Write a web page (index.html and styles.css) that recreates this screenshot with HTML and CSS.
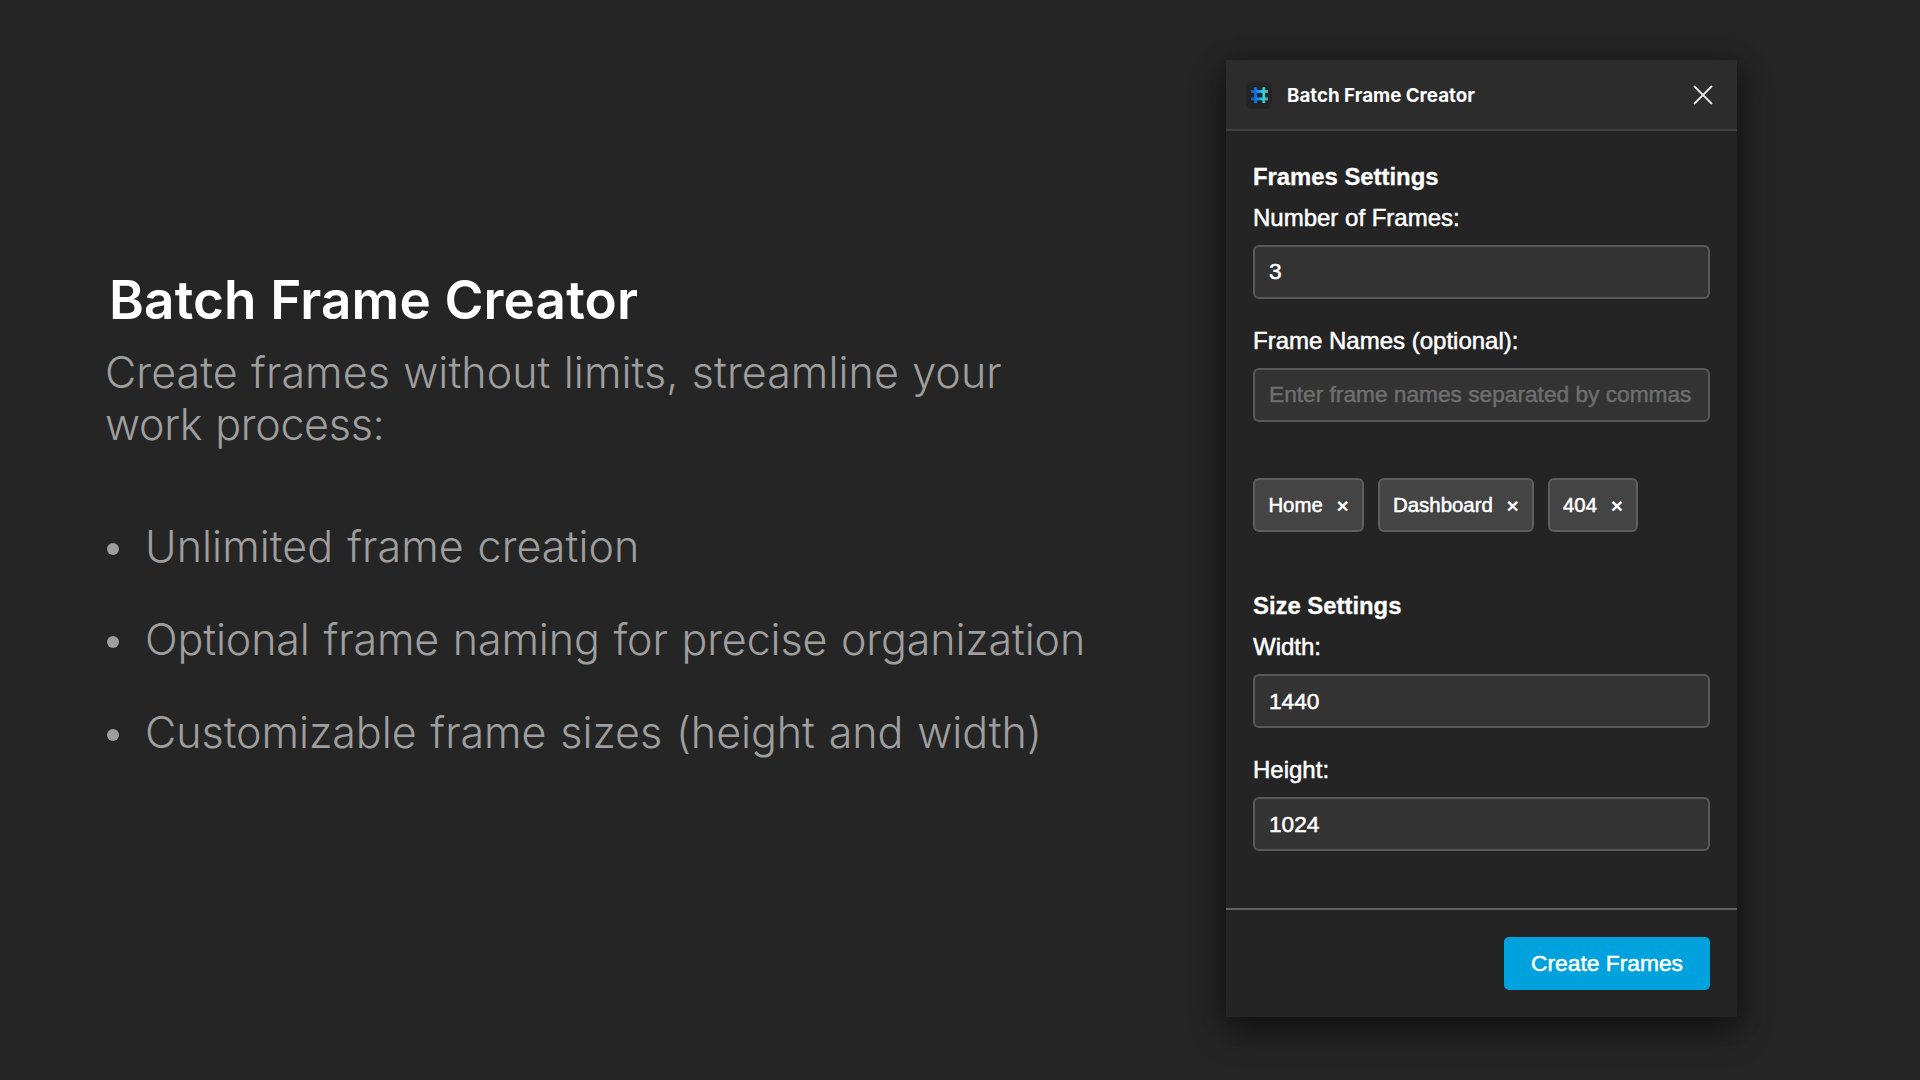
FILE: index.html
```html
<!DOCTYPE html>
<html lang="en">
<head>
<meta charset="utf-8">
<title>Batch Frame Creator</title>
<link rel="stylesheet" href="styles.css">
</head>
<body>
<main class="stage">
  <section class="intro">
    <h1 class="intro-title">Batch Frame Creator</h1>
    <p class="intro-lead">Create frames without limits, streamline your<br><span class="lead-end">work process:</span></p>
    <ul class="features">
      <li class="feature feature-short">Unlimited frame creation</li>
      <li class="feature feature-long">Optional frame naming for precise organization</li>
      <li class="feature">Customizable frame sizes (height and width)</li>
    </ul>
  </section>

  <section class="panel">
    <header class="panel-header">
      <span class="logo">
        <svg width="26" height="28" viewBox="0 0 26 28" fill="none">
          <defs>
            <linearGradient id="hash" gradientUnits="userSpaceOnUse" x1="4.5" y1="0" x2="22.5" y2="0">
              <stop offset="0" stop-color="#3346b4"/>
              <stop offset="0.3" stop-color="#0879f5"/>
              <stop offset="0.72" stop-color="#2bd6e2"/>
              <stop offset="1" stop-color="#5b9a84"/>
            </linearGradient>
          </defs>
          <path d="M5 10.5H22M5 17.9H22M9.5 6.3V22M17.8 6.3V22" stroke="url(#hash)" stroke-width="2.8"/>
        </svg>
      </span>
      <span class="panel-title">Batch Frame Creator</span>
      <svg class="close" width="20" height="20" viewBox="0 0 20 20" fill="none" stroke="#e6e6e6" stroke-width="1.8">
        <path d="M1 1L19 19M19 1L1 19"/>
      </svg>
    </header>

    <div class="panel-body">
      <div class="group">
        <h2 class="heading">Frames Settings</h2>
        <label class="label" for="count">Number of Frames:</label>
        <input class="field" id="count" type="text" value="3">
        <label class="label label-next" for="names">Frame Names (optional):</label>
        <input class="field" id="names" type="text" placeholder="Enter frame names separated by commas">
        <div class="chips">
          <span class="chip">Home<b class="remove">×</b></span>
          <span class="chip">Dashboard<b class="remove">×</b></span>
          <span class="chip">404<b class="remove">×</b></span>
        </div>
      </div>
      <div class="group">
        <h2 class="heading">Size Settings</h2>
        <label class="label" for="width">Width:</label>
        <input class="field field-size" id="width" type="text" value="1440">
        <label class="label label-next" for="height">Height:</label>
        <input class="field field-size" id="height" type="text" value="1024">
      </div>
    </div>

    <footer class="panel-footer">
      <button class="submit" type="button">Create Frames</button>
    </footer>
  </section>
</main>
</body>
</html>
```
FILE: styles.css
```css
* { box-sizing: border-box; }

body {
  margin: 0;
  background: #252525;
  color: #fff;
  font-family: "Liberation Sans", Arial, sans-serif;
}

.stage {
  display: flex;
  justify-content: space-between;
  align-items: flex-start;
  height: 1080px;
  padding: 60px 183px 0 105px;
  overflow: hidden;
}

/* Left column */
.intro {
  padding-top: 208px;
  font-family: Inter, sans-serif;
}

.intro-title {
  margin: 0 0 0 4px;
  font-size: 53px;
  font-weight: 600;
  line-height: 64px;
  letter-spacing: 0.15px;
}

.intro-lead {
  margin: 14px 0 0;
  color: #9e9e9e;
  font-size: 43px;
  font-weight: 300;
  line-height: 52px;
  letter-spacing: 0.05px;
  word-spacing: 1.2px;
  white-space: nowrap;
}

.lead-end { letter-spacing: -0.3px; }

.features {
  display: flex;
  flex-direction: column;
  gap: 41px;
  margin: 70px 0 0;
  padding: 0;
  list-style: none;
}

.feature {
  display: flex;
  align-items: center;
  gap: 26px;
  height: 52px;
  color: #9e9e9e;
  font-size: 43px;
  font-weight: 300;
  line-height: 52px;
  letter-spacing: -0.05px;
  word-spacing: 1.8px;
  white-space: nowrap;
}

.feature-short { letter-spacing: 0.04px; }

.feature-long { letter-spacing: -0.14px; }

.feature::before {
  content: "";
  width: 12px;
  height: 12px;
  margin: 6px 0 0 2px;
  border-radius: 50%;
  background: #9e9e9e;
}

/* Plugin window */
.panel {
  display: flex;
  flex-direction: column;
  width: 511px;
  height: 957px;
  background: #242424;
  box-shadow: 0 3px 24px rgba(0, 0, 0, 0.3), 0 14px 32px rgba(0, 0, 0, 0.42);
}

.panel-header {
  display: flex;
  align-items: center;
  height: 71px;
  padding: 0 24px 0 20px;
  border-bottom: 2px solid #414141;
  background: #2c2c2c;
}

.logo {
  width: 26px;
  height: 28px;
  border-radius: 6px;
  background: #242424;
}

.logo svg { display: block; }

.panel-title {
  margin: 2px 0 0 15px;
  font: 700 18.75px/28px Inter, sans-serif;
}

.close { margin-left: auto; }

.panel-body {
  flex: 1;
  padding: 32px 27px 0;
}

.group + .group { margin-top: 60px; }

.heading,
.label {
  display: block;
  margin: 0;
  font-size: 24px;
  line-height: 28px;
}

.heading {
  font-weight: 700;
  font-size: 23.85px;
  -webkit-text-stroke: 0.3px currentColor;
}

.label {
  margin-top: 13px;
  -webkit-text-stroke: 0.5px currentColor;
}

.label-next { margin-top: 28px; }

.field {
  display: block;
  width: 457px;
  height: 54px;
  margin: 13px 0 0;
  padding: 0 14px 2px;
  border: 2px solid #5a5a5a;
  border-radius: 6px;
  background: #333;
  color: #fff;
  font: 22.7px "Liberation Sans", Arial, sans-serif;
  -webkit-text-stroke: 0.5px currentColor;
}

.field::placeholder { color: #6e6e6e; opacity: 1; }

.field-size { padding: 1px 14px 0; }

.chips {
  display: flex;
  gap: 13.5px;
  margin-top: 56.3px;
}

.chip {
  display: flex;
  align-items: center;
  height: 54px;
  padding: 0 13.4px;
  border: 2px solid #5e5e5e;
  border-radius: 6px;
  background: #444;
  font-size: 20.4px;
  line-height: 48px;
  -webkit-text-stroke: 0.5px currentColor;
}

.remove {
  margin: 1px 0 0 13.7px;
  font-size: 21px;
  -webkit-text-stroke: 0;
}

.panel-footer {
  display: flex;
  justify-content: flex-end;
  height: 109px;
  padding: 27px 27px 0 0;
  border-top: 2px solid #606060;
}

.submit {
  width: 206px;
  height: 53px;
  padding: 0;
  border: 0;
  border-radius: 5px;
  background: #00a2dd;
  color: #fff;
  font: 22.8px "Liberation Sans", Arial, sans-serif;
  -webkit-text-stroke: 0.5px currentColor;
}
```
